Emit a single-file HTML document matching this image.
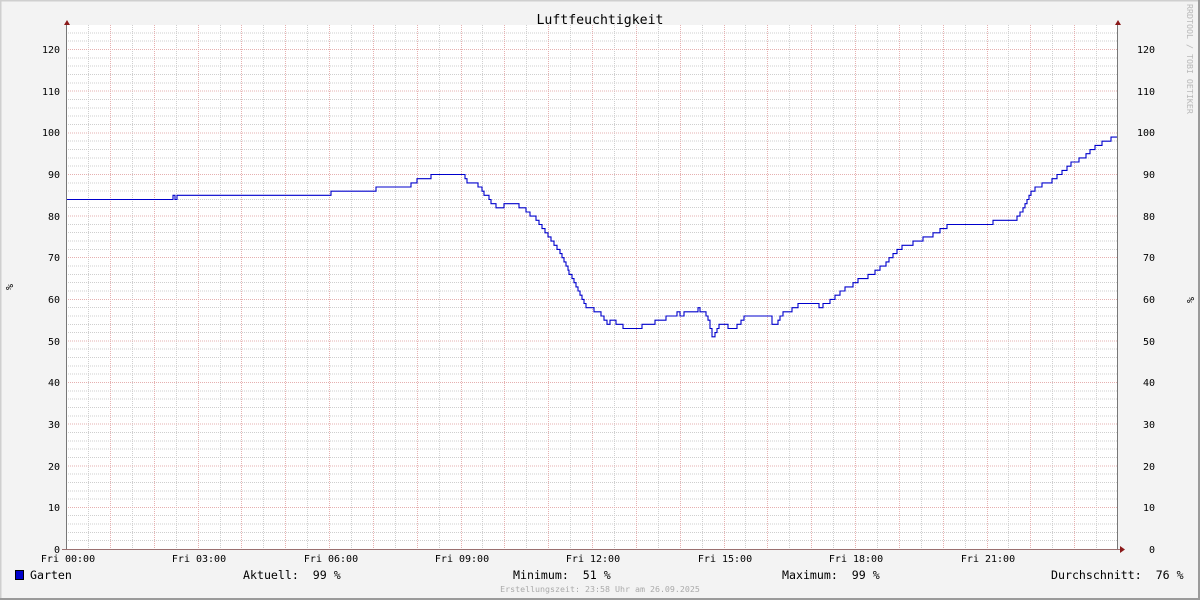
<!DOCTYPE html>
<html><head><meta charset="utf-8"><style>
html,body{margin:0;padding:0;width:1200px;height:600px;overflow:hidden;background:#f3f3f3}
svg{display:block}
text{font-family:"DejaVu Sans Mono","Liberation Mono",monospace;font-size:10px;fill:#000}
</style></head><body>
<svg width="1200" height="600" viewBox="0 0 1200 600" xmlns="http://www.w3.org/2000/svg">
<rect x="0" y="0" width="1200" height="600" fill="#f3f3f3"/>
<path d="M0.5 599V0.5H1199" stroke="#cfcfcf" stroke-width="2" fill="none"/>
<path d="M1199 0V599H0" stroke="#9a9a9a" stroke-width="2" fill="none"/>
<rect x="66" y="25" width="1052" height="524" fill="#fff"/>
<g stroke="#cfcfcf" stroke-dasharray="1,1" shape-rendering="crispEdges">
<path d="M66 540.7H1118M66 532.4H1118M66 524.0H1118M66 515.7H1118M66 499.1H1118M66 490.8H1118M66 482.4H1118M66 474.1H1118M66 457.5H1118M66 449.1H1118M66 440.8H1118M66 432.5H1118M66 415.8H1118M66 407.5H1118M66 399.2H1118M66 390.9H1118M66 374.2H1118M66 365.9H1118M66 357.6H1118M66 349.2H1118M66 332.6H1118M66 324.3H1118M66 316.0H1118M66 307.6H1118M66 291.0H1118M66 282.7H1118M66 274.3H1118M66 266.0H1118M66 249.4H1118M66 241.0H1118M66 232.7H1118M66 224.4H1118M66 207.7H1118M66 199.4H1118M66 191.1H1118M66 182.8H1118M66 166.1H1118M66 157.8H1118M66 149.5H1118M66 141.1H1118M66 124.5H1118M66 116.2H1118M66 107.8H1118M66 99.5H1118M66 82.9H1118M66 74.5H1118M66 66.2H1118M66 57.9H1118M66 41.2H1118M66 32.9H1118"/>
<path d="M88.5 25V549M132.5 25V549M176.5 25V549M220.5 25V549M263.5 25V549M307.5 25V549M351.5 25V549M395.5 25V549M439.5 25V549M482.5 25V549M526.5 25V549M570.5 25V549M614.5 25V549M658.5 25V549M702.5 25V549M745.5 25V549M789.5 25V549M833.5 25V549M877.5 25V549M921.5 25V549M965.5 25V549M1008.5 25V549M1052.5 25V549M1096.5 25V549"/>
</g>
<g stroke="#e6b0b0" stroke-dasharray="1,1" shape-rendering="crispEdges">
<path d="M66 507.4H1118M66 465.8H1118M66 424.2H1118M66 382.6H1118M66 341.0H1118M66 299.4H1118M66 257.7H1118M66 216.1H1118M66 174.5H1118M66 132.9H1118M66 91.2H1118M66 49.6H1118"/>
<path d="M110.5 25V549M154.5 25V549M198.5 25V549M241.5 25V549M285.5 25V549M329.5 25V549M373.5 25V549M417.5 25V549M461.5 25V549M504.5 25V549M548.5 25V549M592.5 25V549M636.5 25V549M680.5 25V549M724.5 25V549M767.5 25V549M811.5 25V549M855.5 25V549M899.5 25V549M943.5 25V549M987.5 25V549M1030.5 25V549M1074.5 25V549"/>
</g>
<path fill="none" stroke="#0000cc" stroke-width="1.1" d="M66 199.5H173V195.3H175V199.5H177V195.3H331V191.2H376V187.0H411V182.9H417V178.7H431V174.5H465V178.7H467V182.9H478V187.0H482V191.2H484V195.3H489V199.5H491V203.7H496V207.8H504V203.7H519V207.8H526V212.0H530V216.1H536V220.3H539V224.5H542V228.6H545V232.8H548V236.9H551V241.1H554V245.3H557V249.4H560V253.6H562V257.7H564V261.9H566V266.1H568V270.2H569V274.4H572V278.6H574V282.7H576V286.9H578V291.0H580V295.2H582V299.4H584V303.5H586V307.7H594V311.8H601V316.0H604V320.2H607V324.3H610V320.2H616V324.3H623V328.5H642V324.3H655V320.2H666V316.0H677V311.8H680V316.0H684V311.8H698V307.7H700V311.8H706V316.0H708V320.2H710V328.5H712V336.8H715V332.6H717V328.5H719V324.3H728V328.5H737V324.3H741V320.2H744V316.0H772V324.3H778V320.2H780V316.0H783V311.8H792V307.7H798V303.5H819V307.7H823V303.5H830V299.4H835V295.2H840V291.0H845V286.9H853V282.7H858V278.6H868V274.4H875V270.2H880V266.1H886V261.9H889V257.7H893V253.6H897V249.4H902V245.3H913V241.1H923V236.9H933V232.8H940V228.6H947V224.5H993V220.3H1017V216.1H1020V212.0H1023V207.8H1025V203.7H1027V199.5H1029V195.3H1031V191.2H1035V187.0H1042V182.9H1052V178.7H1057V174.5H1062V170.4H1067V166.2H1071V162.0H1079V157.9H1086V153.7H1090V149.6H1095V145.4H1102V141.2H1111V137.1H1118"/>
<g shape-rendering="crispEdges">
<path d="M66.5 24V549" stroke="#777" stroke-width="1"/>
<path d="M1117.5 24V549" stroke="#777" stroke-width="1"/>
<path d="M62 549.5H1122" stroke="#9a7070" stroke-width="1"/>
</g>
<path d="M64 25L67 20L70 25Z" fill="#8b1a1a"/>
<path d="M1115 25L1118 20L1121 25Z" fill="#8b1a1a"/>
<path d="M1120 546L1125 549.5L1120 553Z" fill="#8b1a1a"/>
<text x="600" y="24" text-anchor="middle" style="font-size:13.2px">Luftfeuchtigkeit</text>
<g text-anchor="end">
<text x="60" y="553">0</text><text x="60" y="511">10</text><text x="60" y="470">20</text><text x="60" y="428">30</text><text x="60" y="386">40</text><text x="60" y="345">50</text><text x="60" y="303">60</text><text x="60" y="261">70</text><text x="60" y="220">80</text><text x="60" y="178">90</text><text x="60" y="136">100</text><text x="60" y="95">110</text><text x="60" y="53">120</text>
</g>
<g>
<text x="1149" y="553">0</text><text x="1143" y="511">10</text><text x="1143" y="470">20</text><text x="1143" y="428">30</text><text x="1143" y="386">40</text><text x="1143" y="345">50</text><text x="1143" y="303">60</text><text x="1143" y="261">70</text><text x="1143" y="220">80</text><text x="1143" y="178">90</text><text x="1137" y="136">100</text><text x="1137" y="95">110</text><text x="1137" y="53">120</text>
</g>
<text transform="translate(6,287) rotate(90)" text-anchor="middle">%</text>
<text transform="translate(1187,300) rotate(90)" text-anchor="middle">%</text>
<text transform="translate(1187,4) rotate(90)" style="font-size:8.3px;fill:#b8b8b8">RRDTOOL / TOBI OETIKER</text>
<g text-anchor="middle">
<text x="68" y="562">Fri 00:00</text><text x="199" y="562">Fri 03:00</text><text x="331" y="562">Fri 06:00</text><text x="462" y="562">Fri 09:00</text><text x="593" y="562">Fri 12:00</text><text x="725" y="562">Fri 15:00</text><text x="856" y="562">Fri 18:00</text><text x="988" y="562">Fri 21:00</text>
</g>
<rect x="15.5" y="570.5" width="8" height="9" fill="#0000cc" stroke="#000"/>
<text x="30" y="579" style="font-size:11.6px">Garten</text>
<text x="243" y="579" style="font-size:11.6px" xml:space="preserve">Aktuell:  99 %</text>
<text x="513" y="579" style="font-size:11.6px" xml:space="preserve">Minimum:  51 %</text>
<text x="782" y="579" style="font-size:11.6px" xml:space="preserve">Maximum:  99 %</text>
<text x="1051" y="579" style="font-size:11.6px" xml:space="preserve">Durchschnitt:  76 %</text>
<text x="600" y="592" text-anchor="middle" style="font-size:8.3px;fill:#aaa">Erstellungszeit: 23:58 Uhr am 26.09.2025</text>
</svg>
</body></html>
